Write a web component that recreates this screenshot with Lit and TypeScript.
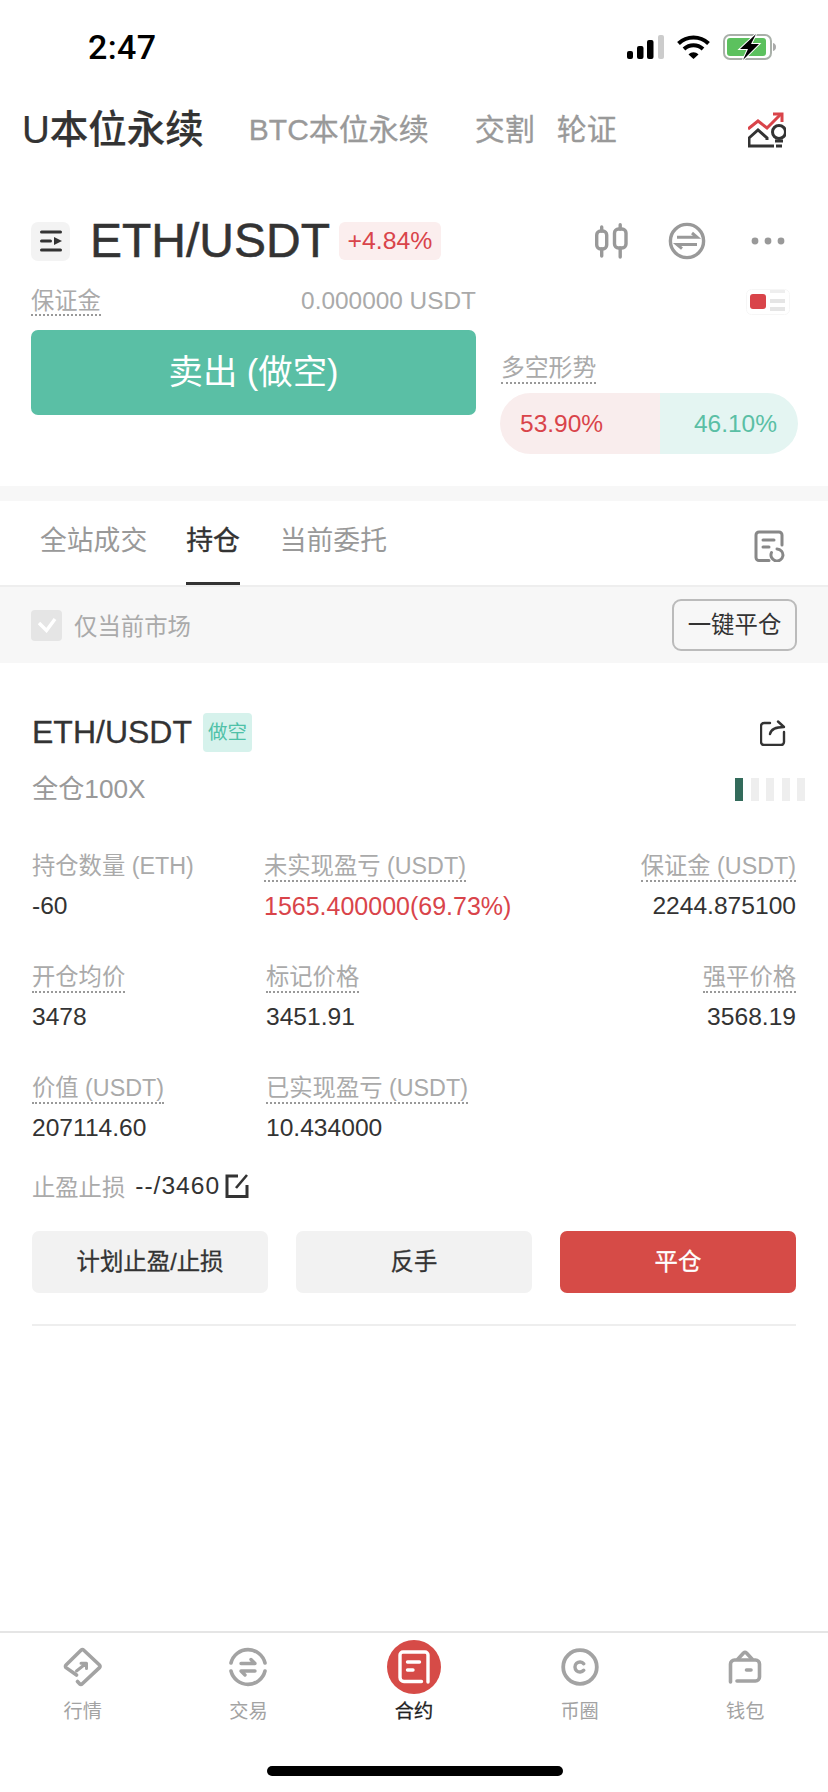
import { LitElement, html, css } from "lit";
import { customElement } from "lit/decorators.js";

const tabIcons = [
  html`<svg width="40" height="40" viewBox="0 0 40 40" fill="none" stroke="#a3a3a3" stroke-width="3.6" stroke-linecap="round" stroke-linejoin="round"><path d="M13.500 28 3 20.600a1.800 1.800 0 0 1 0-2.600L18 3.300a2 2 0 0 1 2.800 0L36.500 18a1.800 1.800 0 0 1 0 2.600L19 37a1.500 1.500 0 0 1-2.200 0L14.500 34.500"/><path d="M13.500 24 23 16.500M18 16.300H23.500V21.500" stroke-width="3"/></svg>`,
  html`<svg width="40" height="40" viewBox="0 0 40 40" fill="none" stroke="#a3a3a3" stroke-width="3.6" stroke-linecap="round"><path d="M3 16A17.500 17.500 0 0 1 37 16"/><path d="M3 24A17.500 17.500 0 0 0 37 24"/><path d="M13 16.500H27L23 12.500M27 24H13L17 28" stroke-width="3.400" stroke-linejoin="round"/></svg>`,
  html`<span class="circ"><svg width="32" height="34" viewBox="0 0 32 34" fill="none" stroke="#fff" stroke-width="3.400" stroke-linecap="round"><path d="M23.500 31.500H6a4 4 0 0 1-4-4V5a3 3 0 0 1 3-3H27a3 3 0 0 1 3 3V32"/><path d="M9.500 12H21.500M9.500 20H15"/></svg></span>`,
  html`<svg width="40" height="40" viewBox="0 0 40 40" fill="none" stroke="#a3a3a3" stroke-width="3.800"><circle cx="20" cy="20" r="16.800"/><path d="M23.800 16.800a5 5 0 1 0 0 6.400" stroke-width="3.400" stroke-linecap="round"/></svg>`,
  html`<svg width="34" height="34" viewBox="0 0 34 34" fill="none" stroke="#a3a3a3" stroke-width="3.600" stroke-linecap="round" stroke-linejoin="round"><path d="M2.500 32V14a4 4 0 0 1 4-4H27.500a4 4 0 0 1 4 4V27a4 4 0 0 1-4 4H9"/><path d="M10 9 15.500 3a2.200 2.200 0 0 1 3 0L24 9"/><path d="M18.500 20H23"/></svg>`,
];
const tabNames = ["行情", "交易", "合约", "币圈", "钱包"];

type Cell = { l: string; v: string; dot?: boolean; red?: boolean; nudge?: boolean };
const rows: Cell[][] = [
  [
    { l: "持仓数量 (ETH)", v: "-60" },
    { l: "未实现盈亏 (USDT)", v: "1565.400000(69.73%)", dot: true, red: true },
    { l: "保证金 (USDT)", v: "2244.875100", dot: true },
  ],
  [
    { l: "开仓均价", v: "3478", dot: true },
    { l: "标记价格", v: "3451.91", dot: true, nudge: true },
    { l: "强平价格", v: "3568.19", dot: true },
  ],
  [
    { l: "价值 (USDT)", v: "207114.60", dot: true },
    { l: "已实现盈亏 (USDT)", v: "10.434000", dot: true, nudge: true },
    { l: "", v: "" },
  ],
];

@customElement("app-root")
export class AppRoot extends LitElement {
  static styles = css`
    :host {
      display: block;
      width: 828px;
      height: 1792px;
      background: #fff;
      overflow: hidden;
      font-family: "Liberation Sans", "Noto Sans CJK SC", sans-serif;
      color: #333;
    }
    .page { display: flex; flex-direction: column; height: 1792px; }
    .status { height: 82px; display: flex; align-items: flex-start; padding: 35px 52px 0 88px; box-sizing: border-box; }
    .time { font: 500 34px/24px Roboto, sans-serif; color: #000; letter-spacing: 0.4px; flex: 1; }
    .status svg { display: block; }
    .sig { margin-right: 13px; }
    .wifi { margin-right: 13px; }
    .batt { margin-top: -1px; }

    .head { height: 96px; display: flex; align-items: center; padding: 0 42px 0 22px; box-sizing: border-box; }
    .h1 { font-size: 38.500px; line-height: 48px; font-weight: 500; color: #333; -webkit-text-stroke: 0.2px #333; margin-right: 45px; }
    .h2 { font-size: 30px; line-height: 40px; color: #999; -webkit-text-stroke: 0.3px #999; }
    .h2.a { margin-right: 46px; }
    .h2.b { margin-right: 22px; }
    .spacer { flex: 1; }

    .sym { height: 42px; margin-top: 42px; display: flex; align-items: center; padding: 0 43px 0 31px; }
    .menu { width: 39px; height: 39px; border-radius: 7px; background: #f3f3f3; display: flex; align-items: center; justify-content: center; margin-right: 20px; }
    .name { font-size: 48px; line-height: 42px; color: #333; -webkit-text-stroke: 0.5px #333; margin-right: 9px; }
    .chg { height: 38px; width: 102px; border-radius: 6px; background: #fbeeee; color: #d9444a; font-size: 24.800px; line-height: 38px; text-align: center; }
    .ic1 { margin-right: 40px; }
    .ic2 { margin-right: 45px; }

    .trade { display: grid; grid-template-columns: 445px 298px; column-gap: 24px; padding: 0 31px; margin-top: 27px; }
    .left { display: flex; flex-direction: column; }
    .mline { display: flex; justify-content: space-between; height: 35px; align-items: flex-start; }
    .lb { font-size: 23.300px; line-height: 24px; color: #aaa; border-bottom: 2px dotted #999; padding-bottom: 1px; }
    .amt { font-size: 24.400px; line-height: 24px; color: #aaa; }
    .sell { margin-top: 6px; height: 85px; border-radius: 7px; background: #5abfa5; color: #fff; font-size: 34.400px; line-height: 85px; text-align: center; box-sizing: border-box; }
    .right { display: flex; flex-direction: column; }
    .toggle { align-self: flex-end; margin-right: 8px; }
    .trend { margin: 41px 0 0 1px; align-self: flex-start; font-size: 23.800px; line-height: 24px; color: #aaa; border-bottom: 2px dotted #999; padding-bottom: 2px; }
    .pill { margin-top: 9px; height: 61px; border-radius: 31px; overflow: hidden; display: flex; font-size: 24.500px; line-height: 61px; }
    .pl { width: 160px; background: #f9eded; color: #d9444a; padding-left: 20px; box-sizing: border-box; }
    .pr { flex: 1; background: #e4f5f2; color: #5abfa5; text-align: right; padding-right: 21px; box-sizing: border-box; }

    .gap { height: 15px; background: #f7f7f7; margin-top: 32px; flex: none; }
    .tabs { height: 84px; display: flex; padding: 0 43px 0 40px; box-sizing: border-box; align-items: flex-start; }
    .tab { font-size: 26.800px; line-height: 36px; color: #999; margin-top: 22px; }
    .tab.on { color: #333; -webkit-text-stroke: 0.4px #333; position: relative; height: 62px; margin-left: 39px; margin-right: 40px; }
    .tab.on::after { content: ""; position: absolute; left: 0; right: 0; bottom: 0; height: 3px; background: #333; }
    .tabs svg { margin-top: 29px; }

    .filter { height: 78px; background: #f7f7f7; border-top: 2px solid #eee; box-sizing: border-box; display: flex; align-items: center; padding: 0 31px 0 31px; }
    .cb { width: 31px; height: 31px; border-radius: 4px; background: #e5e5e5; display: flex; align-items: center; justify-content: center; margin-right: 12px; }
    .ft { font-size: 23.400px; color: #aaa; }
    .one { width: 125px; height: 52px; border: 2px solid #bbb; border-radius: 9px; box-sizing: border-box; font-size: 23.400px; line-height: 48px; text-align: center; color: #333; }

    .pos { padding: 0 32px; display: flex; flex-direction: column; }
    .ptop { display: flex; align-items: center; margin-top: 50px; height: 39px; }
    .pname { font-size: 32px; line-height: 39px; -webkit-text-stroke: 0.3px #333; margin-right: 11px; }
    .side { width: 49px; height: 39px; border-radius: 4px; background: #d6f2ec; color: #4fc1a8; font-size: 19.500px; line-height: 39px; text-align: center; }
    .ptop svg { margin-right: 10px; }
    .pmid { display: flex; align-items: center; height: 28px; margin-top: 23px; font-size: 26.200px; line-height: 28px; color: #999; }
    .meter { display: flex; gap: 7.500px; margin-right: -9px; }
    .meter i { width: 8px; height: 23px; background: #eee; display: block; }
    .meter i.on { background: #336b5b; }

    .stats { margin-top: 50px; display: flex; flex-direction: column; row-gap: 46px; }
    .srow { display: grid; grid-template-columns: 232px 1fr 240px; }
    .cell { display: flex; flex-direction: column; align-items: flex-start; }
    .cell.n { padding-left: 2px; }
    .cell.r { align-items: flex-end; }
    .sl { font-size: 23.300px; line-height: 26px; color: #aaa; border-bottom: 2px solid transparent; padding-bottom: 1px; }
    .sl.d { border-bottom: 2px dotted #999; }
    .sv { font-size: 24.600px; line-height: 24px; margin-top: 12px; color: #333; }
    .sv.hot { color: #d9444a; font-size: 25px; }

    .tp { display: flex; align-items: center; margin-top: 32px; height: 28px; }
    .tpl { font-size: 23.300px; color: #aaa; margin-right: 10px; }
    .tpv { font-size: 24.600px; letter-spacing: 1px; margin-right: 5px; }

    .btns { display: grid; grid-template-columns: repeat(3, 236px); column-gap: 28px; margin-top: 31px; }
    .btn { height: 62px; border-radius: 7px; background: #f2f2f2; font-size: 23.400px; line-height: 62px; text-align: center; color: #333; -webkit-text-stroke: 0.3px #333; }
    .btn.close { background: #d64b47; color: #fff; -webkit-text-stroke: 0.3px #fff; }
    .rule { height: 2px; background: #eee; margin-top: 31px; }

    .nav { margin-top: auto; height: 161px; border-top: 2px solid #e5e5e5; box-sizing: border-box; position: relative; }
    .navr { display: grid; grid-template-columns: repeat(5, 1fr); height: 92px; }
    .ni { display: flex; flex-direction: column; align-items: center; padding-top: 14px; box-sizing: border-box; }
    .ni b { font-weight: 400; font-size: 19.200px; line-height: 24px; color: #a3a3a3; margin-top: 13px; }
    .ni.on b { color: #222; -webkit-text-stroke: 0.3px #222; }
    .icon { height: 40px; display: flex; align-items: center; justify-content: center; }
    .circ { width: 54px; height: 54px; border-radius: 50%; background: #d64b47; display: flex; align-items: center; justify-content: center; flex: none; }
    .home { position: absolute; left: 267px; top: 133px; width: 296px; height: 10px; border-radius: 5px; background: #000; }
  `;

  render() {
    return html`<div class="page">
      <div class="status">
        <div class="time">2:47</div>
        <svg class="sig" width="37" height="24" viewBox="0 0 37 24"><rect x="0" y="16" width="6" height="8" rx="2" fill="#000"/><rect x="10" y="11" width="6.500" height="13" rx="2" fill="#000"/><rect x="20" y="5" width="6.500" height="19" rx="2" fill="#000"/><rect x="31" y="0" width="6" height="24" rx="2" fill="#ccc"/></svg>
        <svg class="wifi" width="33" height="24" viewBox="0 0 33 24" fill="none" stroke="#000" stroke-width="4"><path d="M1.500 8.500C10 .5 23 .5 31.500 8.500"/><path d="M7 14C12.500 9 20.500 9 26 14"/><path d="M11.500 19.500 16.500 24 21.500 19.500C18.500 16.500 14.500 16.500 11.500 19.500Z" fill="#000" stroke="none"/></svg>
        <svg class="batt" width="53" height="26" viewBox="0 0 53 26"><rect x="1" y="1" width="47" height="24" rx="6" fill="none" stroke="#a9b0a9" stroke-width="2"/><rect x="4" y="4" width="39" height="18" rx="3" fill="#5cc15e"/><path d="M50 9c2 .5 3 2 3 4s-1 3.500-3 4z" fill="#aaa"/><path d="M33 0 17 15H25L20 26 36 10H28Z" fill="#000" stroke="#fff" stroke-width="2" paint-order="stroke"/></svg>
      </div>

      <div class="head">
        <div class="h1">U本位永续</div>
        <div class="h2 a">BTC本位永续</div>
        <div class="h2 b">交割</div>
        <div class="h2">轮证</div>
        <div class="spacer"></div>
        <svg width="38" height="36" viewBox="0 0 38 36" fill="none" stroke-width="3"><path d="M0 17 10 9 19 16 33 2" stroke="#d9444a"/><path d="M25 2H34V10" stroke="#d9444a"/><path d="M1 33V26L10 18 19 26V28" stroke="#333"/><path d="M0 34H26" stroke="#333"/><circle cx="31" cy="20" r="6.500" stroke="#333"/><path d="M27 29H35M28 34H34" stroke="#333"/></svg>
      </div>

      <div class="sym">
        <div class="menu"><svg width="24" height="24" viewBox="0 0 24 24" fill="#333"><rect x="1" y="1.500" width="22" height="3" rx="1.500"/><rect x="1" y="10.500" width="12" height="3" rx="1.500"/><path d="M15 8 23 12 15 16Z"/><rect x="1" y="19.500" width="22" height="3" rx="1.500"/></svg></div>
        <div class="name">ETH/USDT</div>
        <div class="chg">+4.84%</div>
        <div class="spacer"></div>
        <svg class="ic1" width="33" height="36" viewBox="0 0 33 36" fill="none" stroke="#999" stroke-width="3.400" stroke-linecap="round"><rect x="1.700" y="8" width="10" height="18" rx="4"/><path d="M6.700 4V8M6.700 26V33"/><rect x="19.500" y="6" width="11.500" height="19" rx="4"/><path d="M25.200 1.700V6M25.200 25V34"/></svg>
        <svg class="ic2" width="38" height="38" viewBox="0 0 38 38" fill="none" stroke="#999" stroke-width="3.400"><circle cx="19" cy="19" r="16.600"/><path d="M9 15.200H29L24 11M29 22.500H9L14 26.700" stroke-width="3"/></svg>
        <svg width="34" height="10" viewBox="0 0 34 10" fill="#999"><circle cx="4" cy="5" r="3.400"/><circle cx="17" cy="5" r="3.400"/><circle cx="30" cy="5" r="3.400"/></svg>
      </div>

      <div class="trade">
        <div class="left">
          <div class="mline"><span class="lb">保证金</span><span class="amt">0.000000 USDT</span></div>
          <div class="sell">卖出 (做空)</div>
        </div>
        <div class="right">
          <svg class="toggle" width="44" height="26" viewBox="0 0 44 26"><rect x=".5" y=".5" width="43" height="25" rx="5" fill="#fff" stroke="#f6f6f6"/><rect x="4" y="5" width="16" height="15" rx="3" fill="#d9444a"/><rect x="24" y="1" width="15" height="3" fill="#eee"/><rect x="24" y="10" width="15" height="4" fill="#e5e5e5"/><rect x="24" y="18" width="15" height="4" fill="#e5e5e5"/></svg>
          <span class="trend">多空形势</span>
          <div class="pill"><div class="pl">53.90%</div><div class="pr">46.10%</div></div>
        </div>
      </div>

      <div class="gap"></div>
      <div class="tabs">
        <div class="tab">全站成交</div>
        <div class="tab on">持仓</div>
        <div class="tab">当前委托</div>
        <div class="spacer"></div>
        <svg width="31" height="32" viewBox="0 0 31 32" fill="none" stroke="#888" stroke-width="3" stroke-linecap="round"><path d="M15 30.500H5a3 3 0 0 1-3-3V5a3 3 0 0 1 3-3H25a3 3 0 0 1 3 3V15"/><path d="M9 10H20M9 17H15"/><path d="M23 19A6 6 0 1 1 17.500 22.500"/></svg>
      </div>

      <div class="filter">
        <div class="cb"><svg width="20" height="16" viewBox="0 0 20 16" fill="none" stroke="#fff" stroke-width="3.400"><path d="M2 6 9.500 13.500 18 2"/></svg></div>
        <div class="ft">仅当前市场</div>
        <div class="spacer"></div>
        <div class="one">一键平仓</div>
      </div>

      <div class="pos">
        <div class="ptop">
          <div class="pname">ETH/USDT</div>
          <div class="side">做空</div>
          <div class="spacer"></div>
          <svg width="26" height="26" viewBox="0 0 26 26" fill="none" stroke="#333" stroke-width="2.400" stroke-linecap="round" stroke-linejoin="round"><path d="M10 3H4a3 3 0 0 0-3 3V22a3 3 0 0 0 3 3H21a3 3 0 0 0 3-3V12"/><path d="M10 14C11 9 15 7 24 7L18 1.500"/></svg>
        </div>
        <div class="pmid">
          <span>全仓100X</span>
          <div class="spacer"></div>
          <div class="meter"><i class="on"></i><i></i><i></i><i></i><i></i></div>
        </div>

        <div class="stats">
          ${rows.map((r) => html`<div class="srow">
            ${r.map((c, i) => html`<div class="cell ${i === 2 ? "r" : ""} ${c.nudge ? "n" : ""}">
              ${c.l ? html`<span class="sl ${c.dot ? "d" : ""}">${c.l}</span><span class="sv ${c.red ? "hot" : ""}">${c.v}</span>` : ""}
            </div>`)}
          </div>`)}
        </div>

        <div class="tp">
          <span class="tpl">止盈止损</span>
          <span class="tpv">--/3460</span>
          <svg width="24" height="24" viewBox="0 0 24 24" fill="none" stroke="#333" stroke-width="3"><path d="M13 2H2V22.500H22V11"/><path d="M11 14 22 1" stroke-width="2.600"/></svg>
        </div>

        <div class="btns">
          <div class="btn">计划止盈/止损</div>
          <div class="btn">反手</div>
          <div class="btn close">平仓</div>
        </div>
        <div class="rule"></div>
      </div>

      <div class="nav">
        <div class="navr">
          ${tabNames.map((n, i) => html`<div class="ni ${i === 2 ? "on" : ""}"><div class="icon">${tabIcons[i]}</div><b>${n}</b></div>`)}
        </div>
        <div class="home"></div>
      </div>
    </div>`;
  }
}
